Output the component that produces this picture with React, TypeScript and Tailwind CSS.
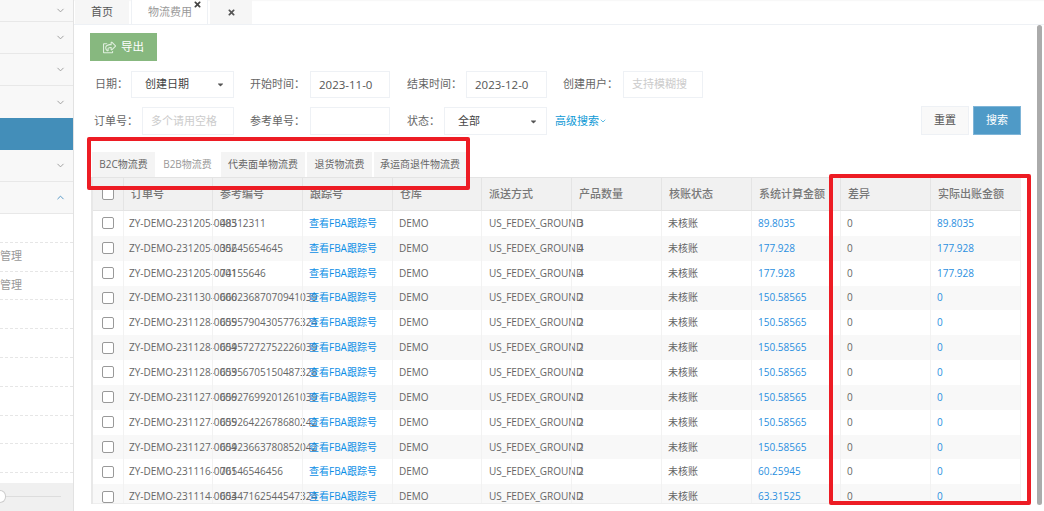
import React from "react";
import { ChevronDown, ChevronUp } from "lucide-react";
import { FaCaretDown, FaRegShareSquare, FaTimes } from "react-icons/fa";

const COLS = "grid grid-cols-[30px_89px_90px_90px_89px_90px_90px_90px_89px_90px_91px]";

const HEADERS = ["订单号", "参考编号", "跟踪号", "仓库", "派送方式", "产品数量", "核账状态", "系统计算金额", "差异", "实际出账金额"];

const ROWS = [
  ["ZY-DEMO-231205-0003", "48512311", "3", "89.8035", "89.8035"],
  ["ZY-DEMO-231205-0002", "35645654645", "4", "177.928", "177.928"],
  ["ZY-DEMO-231205-0001", "74155646", "4", "177.928", "177.928"],
  ["ZY-DEMO-231130-0006", "66023687070941039", "2", "150.58565", "0"],
  ["ZY-DEMO-231128-0005", "65957904305776324", "2", "150.58565", "0"],
  ["ZY-DEMO-231128-0004", "65957272752226039", "2", "150.58565", "0"],
  ["ZY-DEMO-231128-0003", "65956705150487328", "2", "150.58565", "0"],
  ["ZY-DEMO-231127-0006", "65927699201261039", "2", "150.58565", "0"],
  ["ZY-DEMO-231127-0005", "65926422678680242", "2", "150.58565", "0"],
  ["ZY-DEMO-231127-0004", "65923663780852042", "2", "150.58565", "0"],
  ["ZY-DEMO-231116-0001", "76546546456", "2", "60.25945", "0"],
  ["ZY-DEMO-231114-0003", "65447162544547324", "2", "63.31525", "0"],
];

const Caret = () => <FaCaretDown className="ml-auto text-[#555]" size={9} />;

const Field = ({ className, children }: { className: string; children?: React.ReactNode }) => (
  <div className={`h-full flex items-center border border-[#eef1f5] bg-white px-[8px] overflow-hidden whitespace-nowrap ${className}`}>
    {children}
  </div>
);

const SideRow = ({ up }: { up?: boolean }) => (
  <div className="h-[32px] shrink-0 flex items-center justify-end pr-[7px] bg-[#f8f8f8] border-b border-[#e8e8e8]">
    {up ? <ChevronUp size={11} className="text-[#4a90c2]" /> : <ChevronDown size={11} className="text-[#999]" />}
  </div>
);

const SubRow = ({ text }: { text?: string }) => (
  <div className="h-[28.8px] shrink-0 flex items-center border-b border-dashed border-[#e6e6e6] text-[#999]">{text}</div>
);

export default function App() {
  return (
    <div className="relative w-[1044px] h-[511px] overflow-hidden bg-white flex text-[11px] text-[#666] font-['Open_Sans','Noto_Sans_CJK_SC',sans-serif]">
      <aside className="w-[74px] shrink-0 h-full flex flex-col border-r border-[#e2e2e2] bg-white">
        <div className="h-[22px] shrink-0 flex items-center justify-end pr-[7px] bg-[#f8f8f8] border-b border-[#e8e8e8]">
          <ChevronDown size={11} className="text-[#999]" />
        </div>
        <SideRow />
        <SideRow />
        <div className="h-[32px] shrink-0 flex items-center justify-end pr-[7px] bg-[#f8f8f8]">
          <ChevronDown size={11} className="text-[#999]" />
        </div>
        <div className="h-[32px] shrink-0 bg-[#438eb9]" />
        <SideRow />
        <SideRow up />
        <div className="flex-1 flex flex-col overflow-hidden">
          <SubRow />
          <SubRow text="管理" />
          <SubRow text="管理" />
          <SubRow />
          <SubRow />
          <SubRow />
          <SubRow />
          <SubRow />
          <SubRow />
        </div>
        <div className="h-[28px] shrink-0 bg-[#f0f0f0] flex items-start pt-[9px]">
          <div className="w-[6px] h-[13px] -mt-[2px] rounded-r-full border border-l-0 border-[#ccc] bg-white" />
          <div className="w-[55px] h-px mt-[4px] bg-[#ddd]" />
        </div>
      </aside>

      <main className="flex-1 min-w-0 flex flex-col">
        <div className="h-[25px] shrink-0 flex items-stretch pl-[1px] border-b border-[#eef1f5] shadow-[inset_0_2px_2px_-2px_#e5e5e5]">
          <div className="w-[54px] flex items-center justify-center bg-[#f6f6f6] text-[#555]">首页</div>
          <div className="relative w-[77px] ml-[2px] flex items-center pl-[16px] bg-white border-x border-[#eef1f5] text-[#999]">
            物流费用
            <FaTimes size={9} className="absolute right-[5px] top-[0px] text-[#444]" />
          </div>
          <div className="w-[42px] ml-[2px] flex items-center justify-center bg-[#f6f6f6]">
            <FaTimes size={9} className="text-[#555]" />
          </div>
        </div>

        <div className="flex-1 min-h-0 flex flex-col pl-[17px] pr-[23px]">
          <div className="mt-[8px] shrink-0 -ml-px">
            <button className="w-[67px] h-[28px] flex items-center justify-center gap-[5px] bg-[#87b87f] text-white text-[11.5px]">
              <FaRegShareSquare size={13} className="text-[#dfeedd]" />
              导出
            </button>
          </div>

          <div className="mt-[10px] h-[27px] shrink-0 flex items-center">
            <span className="ml-[4px] w-[36px]">日期：</span>
            <Field className="w-[103px] text-[#444] pl-[13px]">
              创建日期
              <Caret />
            </Field>
            <span className="ml-[16px] w-[60px] text-[#666]">开始时间：</span>
            <Field className="w-[80px] text-[#555] text-[11.5px]">2023-11-0</Field>
            <span className="ml-[17px] w-[59px]">结束时间：</span>
            <Field className="w-[81px] text-[#555] text-[11.5px]">2023-12-0</Field>
            <span className="ml-[16px] w-[60px]">创建用户：</span>
            <Field className="w-[80px] text-[#ccc]">支持模糊搜</Field>
          </div>

          <div className="mt-[9px] h-[28px] shrink-0 flex items-center">
            <span className="ml-[3px] w-[48px]">订单号：</span>
            <Field className="w-[92px] text-[#ccc]">多个请用空格</Field>
            <span className="ml-[16px] w-[60px]">参考单号：</span>
            <Field className="w-[80px]" />
            <span className="ml-[17px] w-[37px]">状态：</span>
            <Field className="w-[103px] text-[#444] pl-[13px]">
              全部
              <Caret />
            </Field>
            <span className="ml-[8px] flex items-center text-[#0f9ad6]">
              高级搜索
              <ChevronDown size={8} />
            </span>
            <button className="ml-auto w-[48px] h-[29px] -mt-[2px] bg-[#f9f9f9] border border-[#eef1f5] text-[#555]">重置</button>
            <button className="ml-[4px] w-[48px] h-[29px] -mt-[2px] bg-[#4f9ac7] border border-[#7fb5d8] text-white">搜索</button>
          </div>

          <div className="mt-[17px] h-[26px] shrink-0 flex items-stretch pl-[1px] border-b border-[#e4e4e4] text-[10px]">
            <div className="w-[63px] flex items-center justify-center bg-[#f4f4f4]">B2C物流费</div>
            <div className="w-[63px] ml-[1px] flex items-center justify-center bg-white text-[#999]">B2B物流费</div>
            <div className="w-[84px] ml-[2px] flex items-center justify-center bg-[#f4f4f4]">代卖面单物流费</div>
            <div className="w-[65px] ml-[2px] flex items-center justify-center bg-[#f4f4f4]">退货物流费</div>
            <div className="w-[92px] ml-[2px] flex items-center justify-center bg-[#f4f4f4]">承运商退件物流费</div>
          </div>

          <div className="h-[326px] shrink-0 overflow-hidden border-l-2 border-[#e8e8e8]">
            <div className={`${COLS} h-[33px] bg-[#f1f1f1] border-b border-[#e4e4e4] font-medium text-[#777]`}>
              <div className="flex items-center justify-center pr-[1px]">
                <input type="checkbox" readOnly className="w-[12px] h-[12px] appearance-none rounded-[2px] border border-[#999] bg-white" />
              </div>
              {HEADERS.map((h) => (
                <div key={h} className="flex items-center pl-[7px] border-l border-[#e4e4e4] whitespace-nowrap">
                  {h}
                </div>
              ))}
            </div>
            <div className="h-[293px] overflow-hidden border-b border-[#eeeeee] text-[10px]">
              {ROWS.map((r, i) => (
                <div key={r[0]} className={`${COLS} h-[24.85px] ${i % 2 === 1 ? "bg-[#f8f8f8]" : "bg-white"}`}>
                  <div className="flex items-center justify-center pr-[1px]">
                    <input type="checkbox" readOnly className="w-[12px] h-[12px] appearance-none rounded-[2px] border border-[#999] bg-white" />
                  </div>
                  <div className="flex items-center pl-[5px] border-l border-[#f2f2f2] whitespace-nowrap">{r[0]}</div>
                  <div className="flex items-center pl-[7px] border-l border-[#f2f2f2] whitespace-nowrap">{r[1]}</div>
                  <div className="flex items-center pl-[6px] border-l border-[#f2f2f2] whitespace-nowrap text-[#0a8ee6]">查看FBA跟踪号</div>
                  <div className="flex items-center pl-[6px] border-l border-[#f2f2f2] whitespace-nowrap">DEMO</div>
                  <div className="flex items-center pl-[7px] border-l border-[#f2f2f2] whitespace-nowrap">US_FEDEX_GROUND</div>
                  <div className="flex items-center pl-[6px] border-l border-[#f2f2f2] whitespace-nowrap">{r[2]}</div>
                  <div className="flex items-center pl-[6px] border-l border-[#f2f2f2] whitespace-nowrap">未核账</div>
                  <div className="flex items-center pl-[6px] border-l border-[#f2f2f2] whitespace-nowrap text-[#2a8fe0]">{r[3]}</div>
                  <div className="flex items-center pl-[6px] border-l border-[#f2f2f2] whitespace-nowrap">0</div>
                  <div className="flex items-center pl-[6px] border-x border-[#f2f2f2] whitespace-nowrap text-[#2a8fe0]">{r[4]}</div>
                </div>
              ))}
            </div>
          </div>
        </div>
      </main>

      {/* annotation boxes and scrollbar sit over the page */}
      <div className="absolute left-[87px] top-[137px] w-[383px] h-[53px] border-4 border-[#ed1c24] rounded-[2px]" />
      <div className="absolute left-[829px] top-[174px] w-[202px] h-[331px] border-4 border-[#ed1c24] rounded-[2px]" />
      <div className="absolute left-[1037px] top-[25px] w-[5px] h-[480px] bg-[#ababab] rounded-full" />
    </div>
  );
}
